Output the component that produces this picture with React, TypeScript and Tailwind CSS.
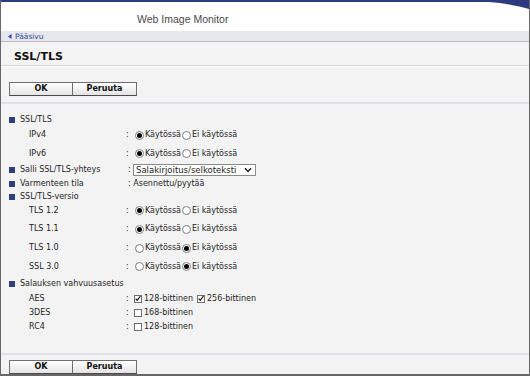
import React from 'react';

// Web Image Monitor — SSL/TLS settings page

type Row =
  | { kind: 'head'; label: string; h: string }
  | { kind: 'radio'; label: string; on: boolean; h: string }
  | { kind: 'select'; label: string; value: string; h: string }
  | { kind: 'text'; label: string; value: string; h: string }
  | { kind: 'check'; label: string; items: { text: string; on: boolean }[]; h: string };

function Radio({ on }: { on: boolean }) {
  return (
    <span className="w-[9px] h-[9px] rounded-full border border-[#7d7d7d] bg-white flex items-center justify-center shrink-0">
      {on && <span className="w-[5px] h-[5px] rounded-full bg-black" />}
    </span>
  );
}

function Check({ on }: { on: boolean }) {
  return (
    <span className="w-[8px] h-[8px] border border-[#6e6e6e] bg-white flex items-center justify-center shrink-0">
      {on && (
        <svg width="7" height="7" viewBox="0 0 7 7" className="-mt-px">
          <path d="M0.8 3.6 L2.6 5.6 L6.3 0.6" fill="none" stroke="#111" strokeWidth="1.4" />
        </svg>
      )}
    </span>
  );
}

function Buttons() {
  return (
    <div className="flex">
      {['OK', 'Peruuta'].map((t, i) => (
        <button
          key={t}
          className={`h-[14px] border border-[#6f6f6f] border-b-[#4a4a4a] bg-gradient-to-b from-white to-[#e4e4e4] text-[8px] font-bold leading-none text-[#111] ${
            i === 0 ? 'w-[64px]' : 'w-[65px] -ml-px'
          }`}
        >
          {t}
        </button>
      ))}
    </div>
  );
}

const rows: Row[] = [
  { kind: 'head', label: 'SSL/TLS', h: 'h-[14px]' },
  { kind: 'radio', label: 'IPv4', on: true, h: 'h-[16px]' },
  { kind: 'radio', label: 'IPv6', on: true, h: 'h-[21px]' },
  { kind: 'select', label: 'Salli SSL/TLS-yhteys', value: 'Salakirjoitus/selkoteksti', h: 'h-[12px]' },
  { kind: 'text', label: 'Varmenteen tila', value: 'Asennettu/pyytää', h: 'h-[15px]' },
  { kind: 'head', label: 'SSL/TLS-versio', h: 'h-[11px]' },
  { kind: 'radio', label: 'TLS 1.2', on: true, h: 'h-[17px]' },
  { kind: 'radio', label: 'TLS 1.1', on: true, h: 'h-[20px]' },
  { kind: 'radio', label: 'TLS 1.0', on: false, h: 'h-[18px]' },
  { kind: 'radio', label: 'SSL 3.0', on: false, h: 'h-[19px]' },
  { kind: 'head', label: 'Salauksen vahvuusasetus', h: 'h-[15px]' },
  {
    kind: 'check',
    label: 'AES',
    items: [
      { text: '128-bittinen', on: true },
      { text: '256-bittinen', on: true },
    ],
    h: 'h-[16px]',
  },
  { kind: 'check', label: '3DES', items: [{ text: '168-bittinen', on: false }], h: 'h-[12px]' },
  { kind: 'check', label: 'RC4', items: [{ text: '128-bittinen', on: false }], h: 'h-[16px]' },
];

function Line({ row }: { row: Row }) {
  if (row.kind === 'head') {
    return (
      <div className={`${row.h} flex items-center pl-[8px]`}>
        <span className="w-[6px] h-[6px] bg-[#2d3f7c] mr-[5px]" />
        <span>{row.label}</span>
      </div>
    );
  }
  const isSub = row.kind === 'radio' || row.kind === 'check';
  return (
    <div className={`${row.h} flex items-center`}>
      {isSub ? (
        <span className="w-[125px] pl-[28px]">{row.label}</span>
      ) : (
        <span className="w-[125px] pl-[8px] flex items-center">
          <span className="w-[6px] h-[6px] bg-[#2d3f7c] mr-[5px]" />
          {row.label}
        </span>
      )}
      {row.kind === 'radio' && (
        <div className="flex items-center">
          <span className="w-[9px]">:</span>
          <Radio on={row.on} />
          <span className="ml-[1px] mr-[1px]">Käytössä</span>
          <Radio on={!row.on} />
          <span className="ml-[1px]">Ei käytössä</span>
        </div>
      )}
      {row.kind === 'check' && (
        <div className="flex items-center">
          <span className="w-[8px]">:</span>
          {row.items.map((it) => (
            <span key={it.text} className="flex items-center mr-[4px]">
              <Check on={it.on} />
              <span className="ml-[2px]">{it.text}</span>
            </span>
          ))}
        </div>
      )}
      {row.kind === 'select' && (
        <div className="flex items-center">
          <span className="w-[5px] ml-[2px]">:</span>
          <div className="w-[123px] h-[12px] border border-[#8a8a8a] bg-white flex items-center justify-between pl-[2px] pr-[3px] text-[8.5px]">
            <span>{row.value}</span>
            <svg width="8" height="6" viewBox="0 0 8 6">
              <path d="M1 1.2 L4 4.4 L7 1.2" fill="none" stroke="#222" strokeWidth="1.5" />
            </svg>
          </div>
        </div>
      )}
      {row.kind === 'text' && (
        <span className="ml-[2px]">: {row.value}</span>
      )}
    </div>
  );
}

export default function App() {
  return (
    <div className="w-[530px] h-[376px] border-l border-r border-b-2 border-[#676767] bg-[#f3f3f3] flex flex-col overflow-hidden font-['DejaVu_Sans',Verdana,sans-serif] text-[8px] text-[#1e1e1e]">
      {/* Header */}
      <div className="relative h-[31px] bg-white border-t-2 border-[#2b3b7e] shrink-0">
        <svg className="absolute right-0 top-0" width="40" height="7" viewBox="0 0 40 7">
          <path d="M0 0 H40 V7 C30 4.5 16 1 0 0 Z" fill="#2b3b7e" />
        </svg>
        <div className="pl-[136px] pt-[12px] font-['Liberation_Sans',Arial,sans-serif] text-[10.5px] leading-none text-[#4a4a4a]">
          Web Image Monitor
        </div>
      </div>

      {/* Breadcrumb */}
      <div className="h-[11px] bg-[#e7e7ee] border-b border-[#b9b9c2] flex items-center pl-[7px] pt-px text-[7.5px] text-[#2f4b9c] shrink-0">
        <svg width="4" height="5" viewBox="0 0 4 5" className="mr-[3px]">
          <path d="M3.5 0 V5 L0 2.5 Z" fill="#2f4b9c" />
        </svg>
        Pääsivu
      </div>

      {/* Title */}
      <div className="h-[24px] flex items-center pl-[13px] pt-[8px] border-b border-[#d6d6d6] shrink-0">
        <span className="text-[11px] font-bold text-[#111]">SSL/TLS</span>
      </div>
      <div className="h-px bg-white shrink-0" />

      {/* Top buttons */}
      <div className="h-[37px] pl-[8px] pt-[15px] border-b-2 border-[#e0e0e6] shrink-0">
        <Buttons />
      </div>

      {/* Settings */}
      <div className="flex-1 pt-[9px]">
        {rows.map((r) => (
          <Line key={r.label} row={r} />
        ))}
      </div>

      {/* Bottom buttons */}
      <div className="h-[21px] pl-[8px] pt-[5px] border-t-2 border-[#e2e0ea] shrink-0">
        <Buttons />
      </div>
    </div>
  );
}
